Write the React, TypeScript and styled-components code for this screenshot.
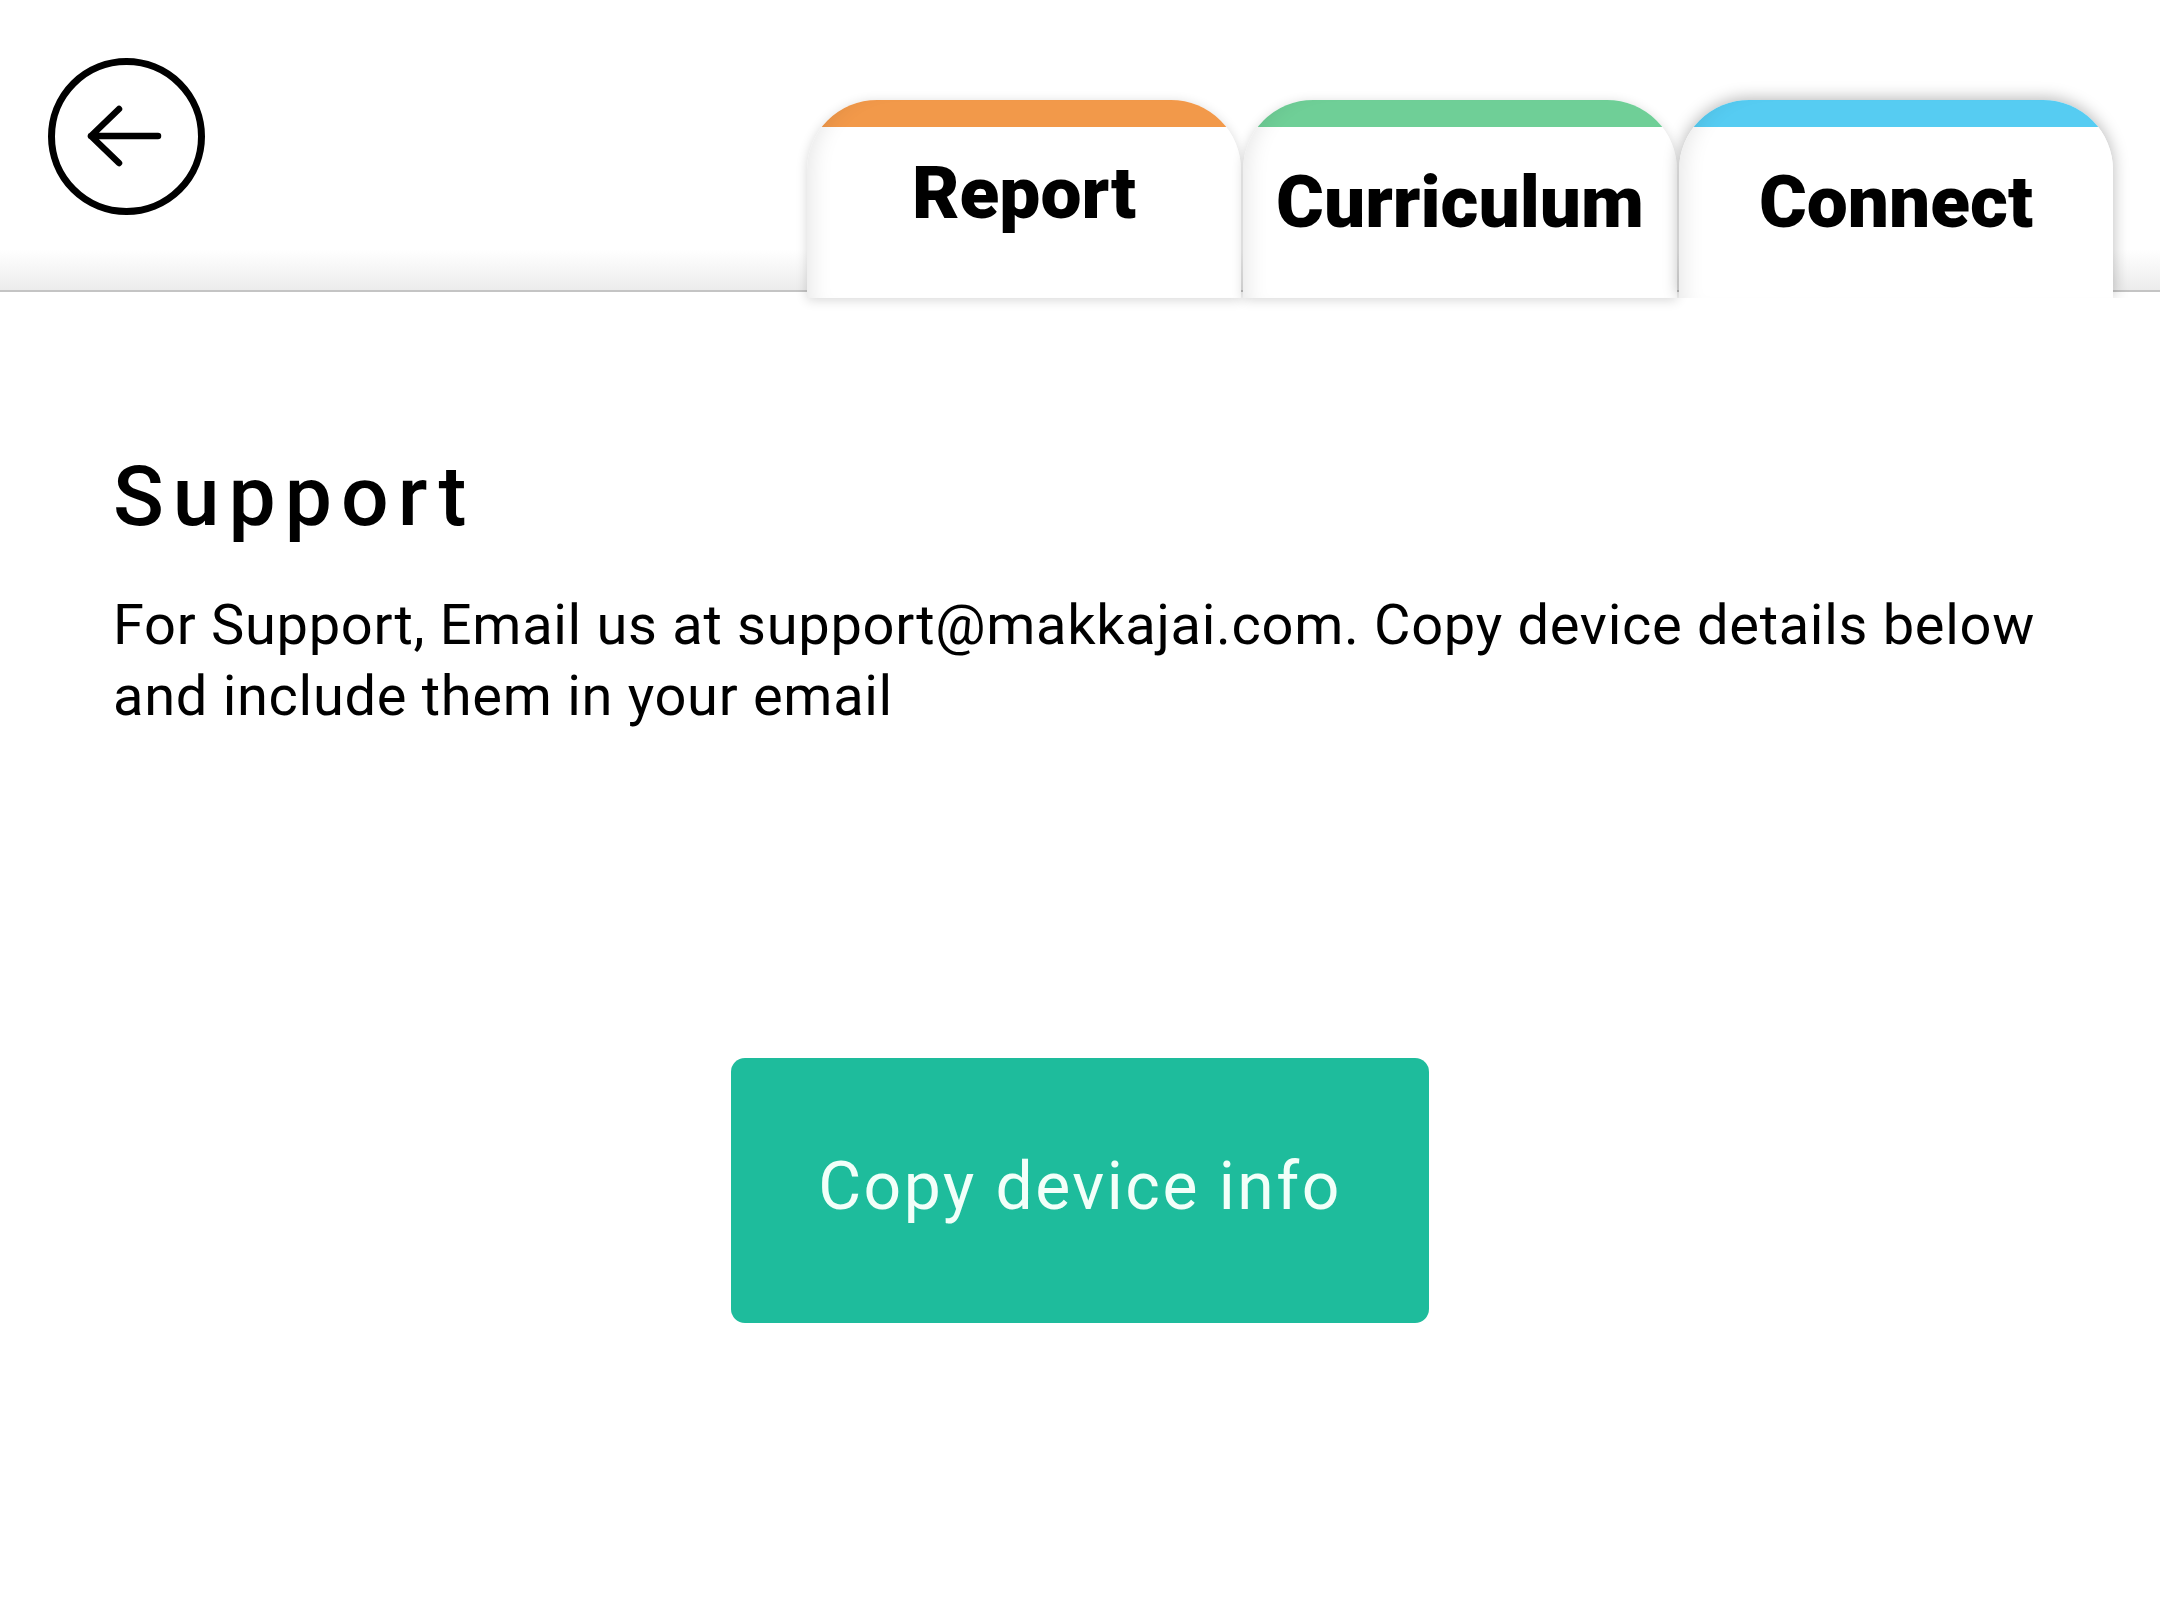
import React from "react";
import styled, { createGlobalStyle } from "styled-components";

const GlobalStyle = createGlobalStyle`
  html, body {
    margin: 0;
    padding: 0;
    background: #ffffff;
  }
  body {
    font-family: Roboto, "Liberation Sans", sans-serif;
    color: #000;
  }
  * { box-sizing: border-box; }
`;

const Page = styled.div`
  width: 2160px;
  min-height: 1620px;
  background: #fff;
  display: flex;
  flex-direction: column;
`;

const Header = styled.header`
  height: 292px;
  display: flex;
  align-items: flex-end;
  padding-left: 48px;
  padding-right: 47px;
  border-bottom: 2px solid #c4c4c4;
  background: linear-gradient(to bottom, #ffffff 0px, #ffffff 250px, #ececec 290px);
  position: relative;
  z-index: 2;
`;

const BackButton = styled.button`
  align-self: flex-start;
  margin-top: 58px;
  width: 157px;
  height: 157px;
  padding: 0;
  border: none;
  background: transparent;
  cursor: pointer;
  display: flex;
`;

const Tabs = styled.nav`
  margin-left: auto;
  display: flex;
  align-items: flex-start;
  gap: 2px;
  margin-bottom: -8px;
`;

const Tab = styled.div<{ $color: string; $active?: boolean }>`
  position: relative;
  width: 434px;
  height: 198px;
  border-radius: 70px 70px 0 0;
  background: linear-gradient(to bottom, ${(p) => p.$color} 0px, ${(p) => p.$color} 27px, #ffffff 27px);
  display: flex;
  justify-content: center;
  z-index: ${(p) => (p.$active ? 3 : 1)};
  box-shadow: ${(p) =>
    p.$active
      ? "0 -2px 16px rgba(0,0,0,0.28), inset 22px 0 22px -18px rgba(0,0,0,0.10)"
      : "0 2px 12px rgba(0,0,0,0.16), inset 22px 0 22px -18px rgba(0,0,0,0.10)"};
  clip-path: ${(p) => (p.$active ? "inset(-40px -40px 0 -40px)" : "none")};
`;

const TabLabel = styled.span<{ $top: number }>`
  padding-top: ${(p) => p.$top}px;
  font-family: Roboto, "Liberation Sans", sans-serif;
  font-weight: 900;
  font-size: 73px;
  line-height: 1;
  color: #000;
  white-space: nowrap;
`;

const Content = styled.main`
  padding: 0 113px;
  display: flex;
  flex-direction: column;
`;

const Heading = styled.h1`
  margin: 163px 0 0;
  font-family: Roboto, "Liberation Sans", sans-serif;
  font-weight: 500;
  font-size: 84px;
  line-height: 84px;
  letter-spacing: 9px;
  color: #000;
`;

const Description = styled.p`
  margin: 51px 0 0;
  font-family: Roboto, "Liberation Sans", sans-serif;
  font-weight: 400;
  font-size: 56px;
  line-height: 71px;
  letter-spacing: 0.7px;
  color: #000;
  white-space: nowrap;
`;

const CopyButton = styled.button`
  align-self: center;
  margin-top: 326px;
  width: 698px;
  height: 265px;
  padding: 0 0 8px;
  border: none;
  border-radius: 14px;
  background: #1ebc9c;
  color: #f2fff9;
  font-family: Roboto, "Liberation Sans", sans-serif;
  font-weight: 400;
  font-size: 66px;
  letter-spacing: 2.5px;
  display: flex;
  align-items: center;
  justify-content: center;
  cursor: pointer;
`;

const BackIcon = () => (
  <svg width="157" height="157" viewBox="0 0 157 157" fill="none">
    <circle cx="78.5" cy="78.5" r="75" stroke="#000" strokeWidth="7" />
    <path
      d="M110 78 H43 M71 51 L43 78 L71 105"
      stroke="#000"
      strokeWidth="6.5"
      strokeLinecap="round"
      strokeLinejoin="round"
    />
  </svg>
);

const tabs = [
  { label: "Report", color: "#F2994A", top: 57, active: false },
  { label: "Curriculum", color: "#6FCF97", top: 66, active: false },
  { label: "Connect", color: "#56CCF2", top: 66, active: true },
];

export default function App() {
  return (
    <Page>
      <GlobalStyle />
      <Header>
        <BackButton aria-label="Back">
          <BackIcon />
        </BackButton>
        <Tabs>
          {tabs.map((t) => (
            <Tab key={t.label} $color={t.color} $active={t.active}>
              <TabLabel $top={t.top}>{t.label}</TabLabel>
            </Tab>
          ))}
        </Tabs>
      </Header>
      <Content>
        <Heading>Support</Heading>
        <Description>
          For Support, Email us at support@makkajai.com. Copy device details below
          <br />
          and include them in your email
        </Description>
        <CopyButton>Copy device info</CopyButton>
      </Content>
    </Page>
  );
}
